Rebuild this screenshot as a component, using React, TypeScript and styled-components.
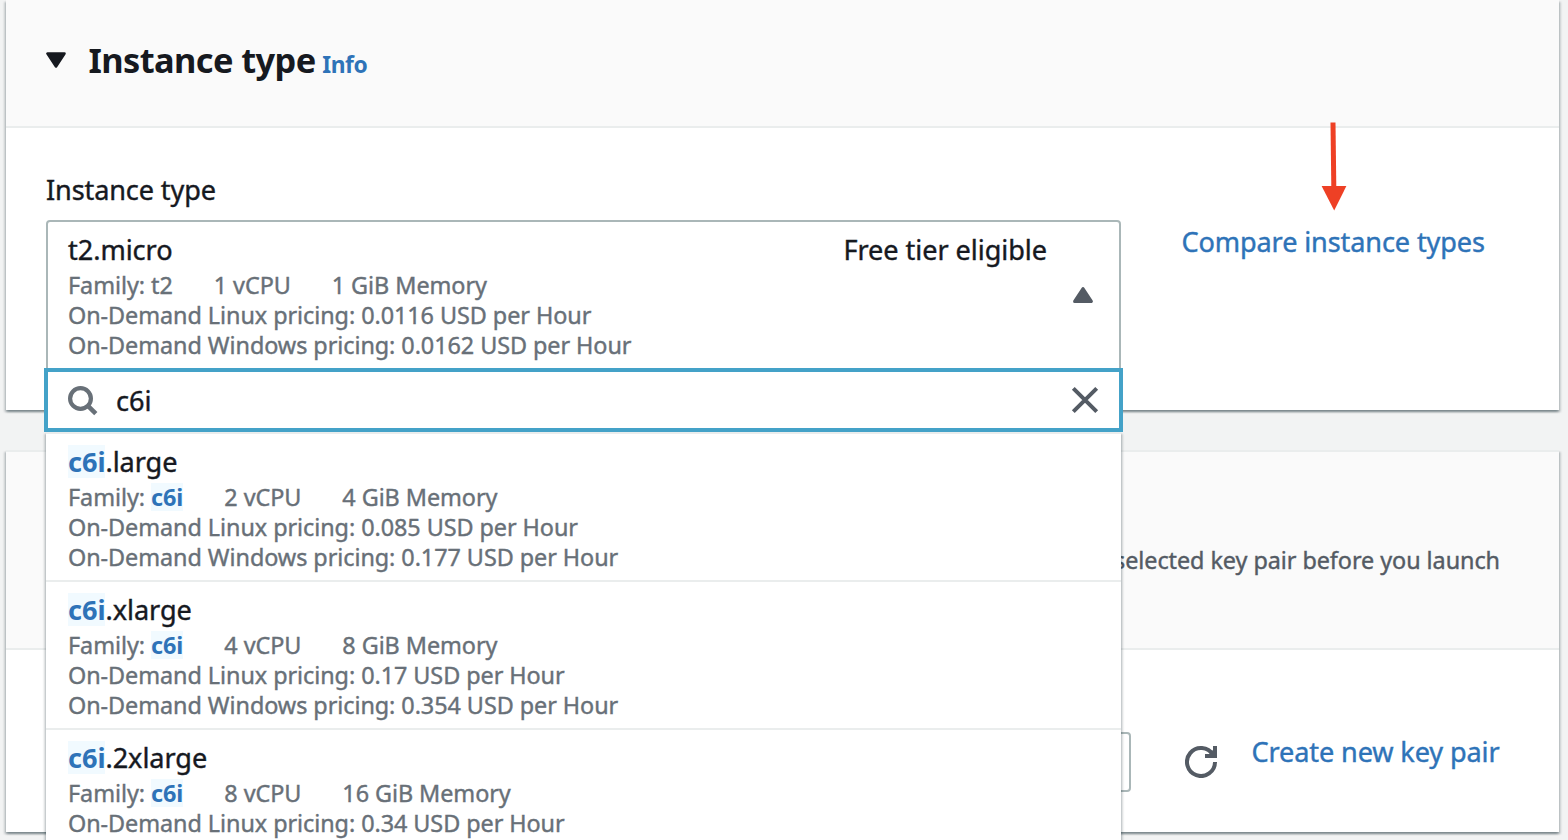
import React from "react";
import styled, { createGlobalStyle } from "styled-components";

const Global = createGlobalStyle`
  * { box-sizing: border-box; }
  html, body { margin: 0; height: 840px; overflow: hidden; }
  body {
    background: #f2f3f3;
    color: #16191f;
    font-family: "Noto Sans", "Open Sans", sans-serif;
    font-size: 27.1px;
    -webkit-text-stroke: 0.4px currentColor;
  }
`;

const Page = styled.main`
  display: flex;
  flex-direction: column;
  gap: 40px;
  height: 840px;
  padding: 0 9px 0 6px;
  overflow: hidden;
`;

const Panel = styled.section<{ $height: number; $topBorder?: boolean }>`
  flex: none;
  display: flex;
  flex-direction: column;
  height: ${(p) => p.$height}px;
  background: #fff;
  border-top: ${(p) => (p.$topBorder ? "2px solid #eaeded" : "none")};
  box-shadow: 0 2px 2px 0 rgba(0, 28, 36, 0.3), 2px 2px 2px 0 rgba(0, 28, 36, 0.15),
    -2px 2px 2px 0 rgba(0, 28, 36, 0.15);
`;

const PanelHeader = styled.header<{ $height: number }>`
  flex: none;
  display: flex;
  height: ${(p) => p.$height}px;
  padding: 0 40px;
  background: #fafafa;
  border-bottom: 2px solid #eaeded;
`;

const Heading = styled.h2`
  display: flex;
  align-items: baseline;
  margin: 35px 0 0 22.5px;
  font-size: 34.4px;
  line-height: 50px;
  letter-spacing: -0.6px;
  font-weight: 700;
  white-space: pre;
  -webkit-text-stroke: 0;
`;

const Caret = styled.svg`
  flex: none;
  margin-top: 51px;
`;

const InfoLink = styled.a`
  margin-left: 6.5px;
  color: #2e73b8;
  font-size: 22.8px;
  letter-spacing: -0.35px;
  font-weight: 700;
`;

const Description = styled.p`
  margin: 90px 19px 0 auto;
  color: #545b64;
  font-size: 23.4px;
  line-height: 36px;
  letter-spacing: -0.06px;
  white-space: nowrap;
`;

const FormRow = styled.div`
  display: flex;
  padding: 0 40px;
`;

const Field = styled.div`
  width: 1075px;
  flex: none;
`;

const Label = styled.label`
  display: block;
  margin-top: 42px;
  height: 50px;
  line-height: 40px;
  letter-spacing: -0.13px;
`;

const SelectWrap = styled.div`
  position: relative;
`;

const SelectBox = styled.div`
  position: relative;
  display: flex;
  height: 152px;
  padding: 8px 25px 0 20px;
  border: 2px solid #aab7b8;
  border-radius: 4px;
  background: #fff;
`;

const SelectCaret = styled.svg`
  flex: none;
  margin: 56px 0 0 25px;
`;

const Dropdown = styled.div`
  position: absolute;
  z-index: 2;
  top: 148px;
  left: -2px;
  width: 1079px;
`;

const SearchBox = styled.div`
  position: relative;
  z-index: 1;
  display: flex;
  align-items: center;
  height: 64px;
  padding: 0 20px 0 19px;
  border: 4px solid #44a2c8;
  background: #fff;
`;

const SearchText = styled.span`
  flex: 1;
  margin-left: 17px;
  padding-top: 2px;
  line-height: 40px;
`;

const OptionList = styled.ul`
  list-style: none;
  margin: 0 2px;
  padding: 0;
  background: #fff;
  box-shadow: 0 2px 2px 0 rgba(0, 28, 36, 0.3), 2px 2px 2px 0 rgba(0, 28, 36, 0.15),
    -2px 2px 2px 0 rgba(0, 28, 36, 0.15);
`;

const Option = styled.li`
  height: 148px;
  padding: 8px 22px 0;
  border-top: 2px solid #eaeded;
`;

const Details = styled.div`
  flex: 1;
`;

const TitleLine = styled.div`
  display: flex;
  justify-content: space-between;
  height: 40px;
  line-height: 40px;
  letter-spacing: -0.05px;
`;

const MetaLine = styled.div`
  display: flex;
  gap: 41px;
  height: 30px;
  color: #687078;
  font-size: 23.4px;
  line-height: 30px;
  letter-spacing: -0.06px;
  white-space: pre;
`;

const Mark = styled.mark<{ $small?: boolean }>`
  display: inline-block;
  height: ${(p) => (p.$small ? 28 : 33)}px;
  line-height: ${(p) => (p.$small ? 28 : 33)}px;
  background: #f1faff;
  color: #2e73b8;
  font-weight: 700;
  -webkit-text-stroke: 0;
`;

const Link = styled.a<{ $left: number; $top: number }>`
  margin: ${(p) => p.$top}px 0 0 ${(p) => p.$left}px;
  color: #2e73b8;
  line-height: 40px;
  letter-spacing: -0.12px;
  white-space: nowrap;
`;

const KeyPairSelect = styled.div`
  flex: none;
  width: 1085px;
  height: 60px;
  margin-top: 82px;
  border: 2px solid #aab7b8;
  border-radius: 4px;
`;

const RefreshIcon = styled.svg`
  flex: none;
  margin: 96px 0 0 54px;
`;

const Pointer = styled.svg`
  position: absolute;
  z-index: 3;
  left: 1320px;
  top: 121px;
`;

type Instance = {
  size: string;
  cpu: string;
  memory: string;
  linux: string;
  windows?: string;
};

const instances: Instance[] = [
  { size: "large", cpu: "2", memory: "4", linux: "0.085", windows: "0.177" },
  { size: "xlarge", cpu: "4", memory: "8", linux: "0.17", windows: "0.354" },
  { size: "2xlarge", cpu: "8", memory: "16", linux: "0.34" },
];

function InstanceDetails({
  title,
  family,
  note,
  info,
}: {
  title: React.ReactNode;
  family: React.ReactNode;
  note?: string;
  info: Omit<Instance, "size">;
}) {
  return (
    <Details>
      <TitleLine>
        <span>{title}</span>
        {note && <span>{note}</span>}
      </TitleLine>
      <MetaLine>
        <span>Family: {family}</span>
        <span>{info.cpu} vCPU</span>
        <span>{info.memory} GiB Memory</span>
      </MetaLine>
      <MetaLine>{`On-Demand Linux pricing: ${info.linux} USD per Hour`}</MetaLine>
      {info.windows && <MetaLine>{`On-Demand Windows pricing: ${info.windows} USD per Hour`}</MetaLine>}
    </Details>
  );
}

export default function App() {
  return (
    <>
      <Global />
      <Page>
        <Panel $height={410}>
          <PanelHeader $height={128}>
            <Caret width="20" height="18" viewBox="0 0 20 18">
              <path d="M1.5 2.5h17L10 15.5z" fill="#16191f" stroke="#16191f" strokeWidth="2.6" strokeLinejoin="round" />
            </Caret>
            <Heading>
              Instance type<InfoLink>Info</InfoLink>
            </Heading>
          </PanelHeader>
          <FormRow>
            <Field>
              <Label>Instance type</Label>
              <SelectWrap>
                <SelectBox>
                  <InstanceDetails
                    title="t2.micro"
                    family="t2"
                    note="Free tier eligible"
                    info={{ cpu: "1", memory: "1", linux: "0.0116", windows: "0.0162" }}
                  />
                  <SelectCaret width="22" height="18" viewBox="0 0 22 18">
                    <path d="M11 2.6L19.4 15.4H2.6z" fill="#545b64" stroke="#545b64" strokeWidth="3" strokeLinejoin="round" />
                  </SelectCaret>
                </SelectBox>
                <Dropdown>
                  <SearchBox>
                    <svg width="32" height="32" viewBox="0 0 32 32" fill="none" stroke="#687078" strokeWidth="4.2">
                      <circle cx="13.5" cy="14.5" r="10.4" />
                      <path d="M20.4 21.4l8.4 8.2" strokeWidth="4.6" />
                    </svg>
                    <SearchText>c6i</SearchText>
                    <svg width="28" height="28" viewBox="0 0 28 28" fill="none" stroke="#545b64" strokeWidth="4">
                      <path d="M2.3 2.3l23.4 23.4M25.7 2.3l-23.4 23.4" />
                    </svg>
                  </SearchBox>
                  <OptionList>
                    {instances.map((i) => (
                      <Option key={i.size}>
                        <InstanceDetails
                          title={
                            <>
                              <Mark>c6i</Mark>.{i.size}
                            </>
                          }
                          family={<Mark $small>c6i</Mark>}
                          info={i}
                        />
                      </Option>
                    ))}
                  </OptionList>
                </Dropdown>
              </SelectWrap>
            </Field>
            <Link $left={60.5} $top={94}>Compare instance types</Link>
          </FormRow>
        </Panel>
        <Panel $height={382} $topBorder>
          <PanelHeader $height={198}>
            <Description>selected key pair before you launch</Description>
          </PanelHeader>
          <FormRow>
            <KeyPairSelect />
            <RefreshIcon width="32" height="32" viewBox="0 0 32 32" fill="none" stroke="#545b64" strokeWidth="4">
              <path d="M30 16A14 14 0 1 1 28 8.8" />
              <path d="M30 0v12M20 10h12" />
              <path d="M24 8l4-4v4z" fill="#545b64" stroke="none" />
            </RefreshIcon>
            <Link $left={34.5} $top={82}>Create new key pair</Link>
          </FormRow>
        </Panel>
      </Page>
      <Pointer width="28" height="92" viewBox="0 0 28 92" fill="#ee4025">
        <path d="M10.5 1.5h5l.8 64h-5z" />
        <path d="M1.6 65h24.8L14.2 89.5z" />
      </Pointer>
    </>
  );
}
